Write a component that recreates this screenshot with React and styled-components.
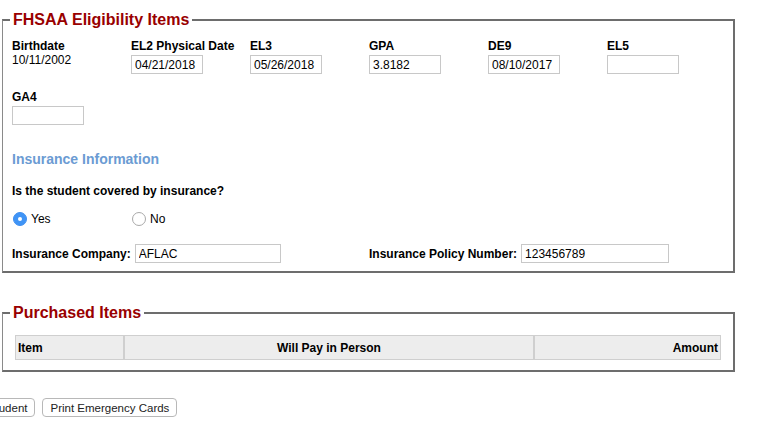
import React, { useState } from 'react';
import styled, { createGlobalStyle } from 'styled-components';

const GlobalStyle = createGlobalStyle`
  html, body {
    margin: 0;
    padding: 0;
    background: #fff;
    overflow: hidden;
  }
  body {
    font-family: 'Liberation Sans', Arial, Helvetica, sans-serif;
    font-size: 12px;
    color: #000;
  }
  * { box-sizing: border-box; }
`;

const Page = styled.div`
  padding: 11px 0 0 2px;
  width: 758px;
`;

const Fieldset = styled.fieldset`
  width: 733px;
  margin: 0 0 ${({ gap }) => gap || 0}px 0;
  padding: ${({ pad }) => pad};
  border-style: solid;
  border-color: #6d6d6d;
  border-width: 2px 2px 2px 1px;
  border-left-color: #8a8a8a;
  min-width: 0;
`;

const Legend = styled.legend`
  font-size: 16px;
  line-height: 17px;
  font-weight: bold;
  color: #990000;
  padding: 0 3px;
  margin-left: -2px;
`;

const FieldGrid = styled.div`
  display: grid;
  grid-template-columns: repeat(6, 119px);
  row-gap: 16px;
  margin-top: 1px;
`;

const Field = styled.div`
  display: flex;
  flex-direction: column;
  align-items: flex-start;
`;

const Label = styled.label`
  font-weight: bold;
  line-height: 14px;
  white-space: nowrap;
`;

const Value = styled.span`
  line-height: 14px;
`;

const TextInput = styled.input`
  width: ${({ w }) => w || 72}px;
  height: 19px;
  margin: ${({ stacked }) => (stacked ? '2px 0 0 0' : '0')};
  padding: 0 3px;
  border: 1px solid #c8c8c8;
  font-family: 'Liberation Sans', Arial, sans-serif;
  font-size: 12px;
  color: #000;
  background: #fff;
  outline: none;
`;

const SectionTitle = styled.h3`
  margin: 26px 0 0 0;
  font-size: 14px;
  line-height: 17px;
  font-weight: bold;
  color: #6b9bd3;
`;

const Question = styled.div`
  margin-top: 16px;
  font-weight: bold;
  line-height: 14px;
`;

const RadioRow = styled.div`
  display: grid;
  grid-template-columns: repeat(2, 119px);
  margin-top: 13px;
  height: 16px;
`;

const RadioOption = styled.label`
  display: flex;
  align-items: center;
  gap: 4px;
  font-size: 12px;
  line-height: 16px;
  cursor: pointer;
`;

const Radio = styled.input.attrs({ type: 'radio' })`
  appearance: none;
  -webkit-appearance: none;
  margin: 0 0 0 1px;
  width: 14px;
  height: 14px;
  border-radius: 50%;
  border: 1px solid #a9a9a9;
  background: #fff;
  position: relative;
  &:checked {
    border-color: #3f8ff0;
    background: #3f94f6;
  }
  &:checked::after {
    content: '';
    position: absolute;
    left: 4px;
    top: 4px;
    width: 4px;
    height: 4px;
    border-radius: 50%;
    background: #fff;
  }
`;

const InlineRow = styled.div`
  display: grid;
  grid-template-columns: 357px 1fr;
  margin-top: 17px;
`;

const InlineField = styled.div`
  display: flex;
  align-items: center;
  gap: 4px;
`;

const Table = styled.table`
  width: 706px;
  margin-left: 3px;
  border-collapse: separate;
  border-spacing: 0;
`;

const Th = styled.th`
  height: 25px;
  padding: 0 2px;
  background: #ededed;
  border: 1px solid #cfcfcf;
  font-size: 12px;
  font-weight: bold;
  text-align: ${({ align }) => align || 'left'};
  width: ${({ w }) => w}px;
`;

const ButtonBar = styled.div`
  display: flex;
  gap: 7px;
  margin: 26px 0 0 -49px;
`;

const Button = styled.button`
  height: 19px;
  padding: 0 7px;
  background: #fff;
  border: 1px solid #b8b8b8;
  border-radius: 4px;
  font-family: 'Liberation Sans', Arial, sans-serif;
  font-size: 11.5px;
  color: #222;
  cursor: pointer;
`;

const eligibility = [
  { label: 'EL2 Physical Date', value: '04/21/2018' },
  { label: 'EL3', value: '05/26/2018' },
  { label: 'GPA', value: '3.8182' },
  { label: 'DE9', value: '08/10/2017' },
  { label: 'EL5', value: '' },
  { label: 'GA4', value: '' },
];

const App = () => {
  const [covered, setCovered] = useState('yes');

  return (
    <>
      <GlobalStyle />
      <Page>
        <Fieldset pad="10px 9px 8px 9px" gap={31}>
          <Legend>FHSAA Eligibility Items</Legend>
          <FieldGrid>
            <Field>
              <Label>Birthdate</Label>
              <Value>10/11/2002</Value>
            </Field>
            {eligibility.map(item => (
              <Field key={item.label}>
                <Label>{item.label}</Label>
                <TextInput stacked defaultValue={item.value} />
              </Field>
            ))}
          </FieldGrid>

          <SectionTitle>Insurance Information</SectionTitle>
          <Question>Is the student covered by insurance?</Question>
          <RadioRow>
            <RadioOption>
              <Radio name="covered" checked={covered === 'yes'} onChange={() => setCovered('yes')} />
              Yes
            </RadioOption>
            <RadioOption>
              <Radio name="covered" checked={covered === 'no'} onChange={() => setCovered('no')} />
              No
            </RadioOption>
          </RadioRow>

          <InlineRow>
            <InlineField>
              <Label>Insurance Company:</Label>
              <TextInput w={146} defaultValue="AFLAC" />
            </InlineField>
            <InlineField>
              <Label>Insurance Policy Number:</Label>
              <TextInput w={148} defaultValue="123456789" />
            </InlineField>
          </InlineRow>
        </Fieldset>

        <Fieldset pad="14px 9px 10px 9px">
          <Legend>Purchased Items</Legend>
          <Table>
            <thead>
              <tr>
                <Th w={109}>Item</Th>
                <Th w={410} align="center">Will Pay in Person</Th>
                <Th w={187} align="right">Amount</Th>
              </tr>
            </thead>
          </Table>
        </Fieldset>

        <ButtonBar>
          <Button>Print Student</Button>
          <Button>Print Emergency Cards</Button>
        </ButtonBar>
      </Page>
    </>
  );
};

export default App;
